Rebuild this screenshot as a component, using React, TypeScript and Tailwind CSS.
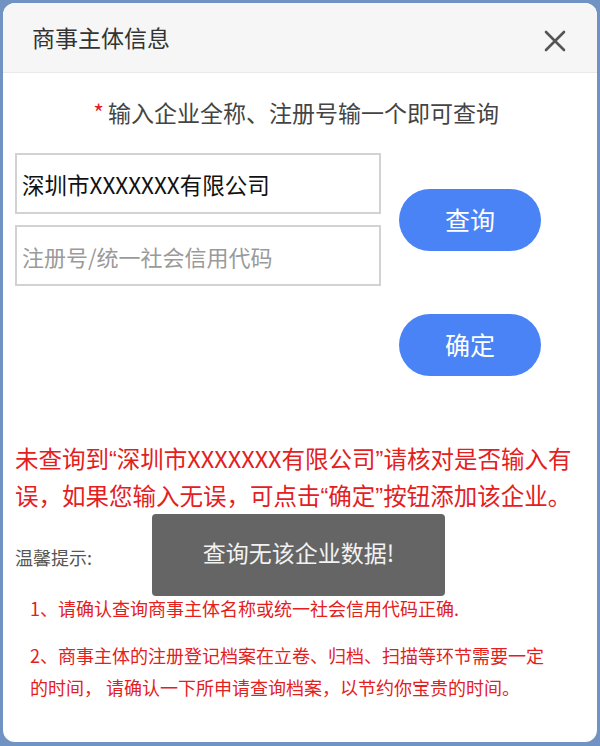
import React from 'react';

const font = { fontFamily: '"Noto Sans CJK SC", "Noto Sans", sans-serif' };
const latin = { fontFamily: '"Liberation Sans", "Noto Sans CJK SC", sans-serif' };

function CloseIcon() {
    return (
        <svg width="22" height="22" viewBox="0 0 22 22" className="text-[#555]">
            <path d="M2 2 L20 20 M20 2 L2 20" stroke="currentColor" strokeWidth="2.6" strokeLinecap="round" />
        </svg>
    );
}

// narrow western-style quote marks inside CJK text
function Q({ children }: { children: React.ReactNode }) {
    return <span style={latin}>{children}</span>;
}

export default function App() {
    const [company, setCompany] = React.useState('深圳市XXXXXXX有限公司');
    const [code, setCode] = React.useState('');

    return (
        <div className="w-[600px] h-[746px] bg-[#7093c3] pt-[3px] pl-[3px] pr-[3px] pb-[4px]" style={font}>
            <div className="relative h-full bg-white rounded-[12px] overflow-hidden flex flex-col">
                {/* header */}
                <div className="h-[70px] shrink-0 bg-[#f6f6f6] border-b border-[#e9e9e9] pl-[29px] pr-[31px] flex items-center justify-between">
                    <span className="text-[23px] text-[#333] leading-none">商事主体信息</span>
                    <button className="mt-[6px]">
                        <CloseIcon />
                    </button>
                </div>

                <div className="px-[12px]">
                    <p className="mt-[24px] text-center text-[23px] leading-[30px] text-[#444] pr-[8px]">
                        <span className="text-[#e4201e] mr-[4px]">*</span>输入企业全称、注册号输一个即可查询
                    </p>

                    <div className="mt-[26px] grid grid-cols-[366px_142px] gap-x-[18px] items-center">
                        <div className="flex flex-col gap-[11px]">
                            <input
                                value={company}
                                onChange={(e) => setCompany(e.target.value)}
                                className="h-[61px] border-2 border-[#d2d2d2] px-[5px] text-[22.5px] text-[#111] outline-none"
                            />
                            <input
                                value={code}
                                onChange={(e) => setCode(e.target.value)}
                                placeholder="注册号/统一社会信用代码"
                                className="h-[61px] border-2 border-[#d2d2d2] px-[5px] text-[22px] text-[#111] placeholder:text-[#9a9a9a] outline-none"
                            />
                        </div>
                        <button className="h-[62px] rounded-full bg-[#4a83f6] text-white text-[25px]">查询</button>

                        <div />
                        <button className="mt-[28px] h-[62px] rounded-full bg-[#4a83f6] text-white text-[25px]">确定</button>
                    </div>

                    <p className="mt-[65px] text-[23.5px] leading-[35px] text-[#e4201e] whitespace-nowrap">
                        未查询到<Q>“</Q>深圳市XXXXXXX有限公司<Q>”</Q>请核对是否输入有
                        <br />
                        误，如果您输入无误，可点击<Q>“</Q>确定<Q>”</Q>按钮添加该企业。
                    </p>

                    <p className="mt-[28px] text-[18px] leading-[28px] text-[#555]">温馨提示:</p>

                    <div className="pl-[15px] pr-[30px] text-[18px] leading-[32px] text-[#e4201e]">
                        <p className="mt-[21px]">1、请确认查询商事主体名称或统一社会信用代码正确.</p>
                        <p className="mt-[15px]">2、商事主体的注册登记档案在立卷、归档、扫描等环节需要一定的时间， 请确认一下所申请查询档案，以节约你宝贵的时间。</p>
                    </div>
                </div>

                {/* toast */}
                <div className="absolute left-[149px] top-[511px] w-[293px] h-[82px] rounded-[4px] bg-[#656565] flex items-center justify-center">
                    <span className="text-[23px] text-[#f2f2f2] -mt-[6px]">查询无该企业数据!</span>
                </div>
            </div>
        </div>
    );
}
